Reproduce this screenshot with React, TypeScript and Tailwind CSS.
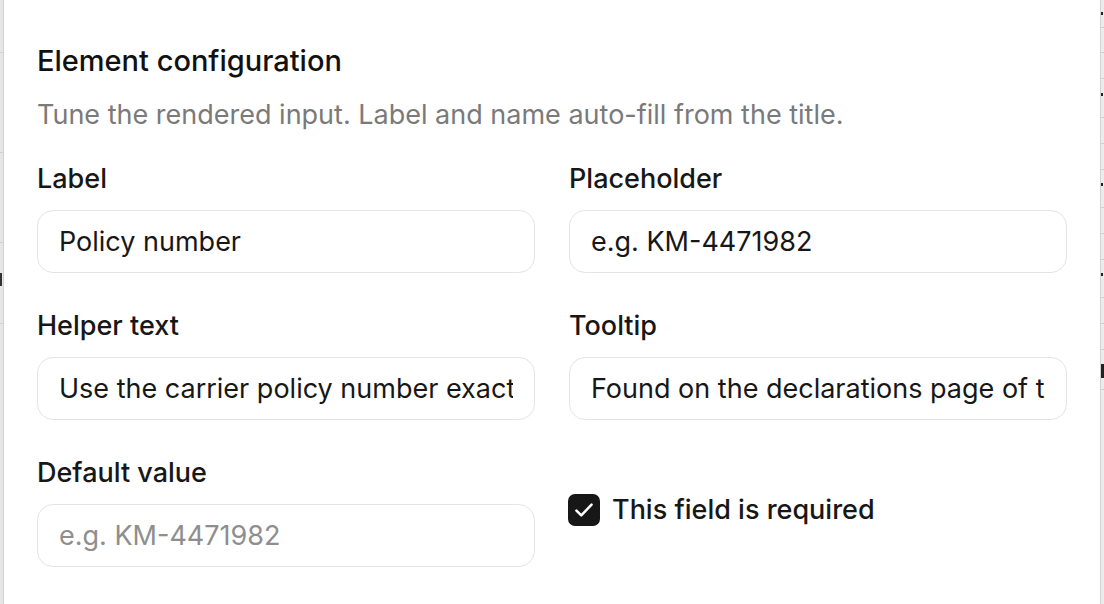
import React from "react";

function Field({ label, value, placeholder }: { label: string; value?: string; placeholder?: string }) {
  return (
    <div className="flex flex-col">
      <div className="text-[27px] leading-[32px] font-medium text-[#171717]">{label}</div>
      <input
        readOnly
        value={value ?? ""}
        placeholder={placeholder}
        className="mt-[15px] h-[63px] w-full rounded-[16px] border border-[#e4e4e4] bg-white px-[21px] text-[27px] text-[#171717] outline-none placeholder:text-[#8e8e8e]"
        style={{ fontFamily: "Inter, sans-serif" }}
      />
    </div>
  );
}

export default function App() {
  const rightLines = [27, 52, 78, 117, 143, 169, 207, 233, 259, 297, 323, 349, 389];
  return (
    <div
      className="flex h-[604px] w-[1104px] overflow-hidden bg-white text-[#171717]"
      style={{ fontFamily: "Inter, 'Noto Sans', sans-serif" }}
    >
      {/* left background strip */}
      <div className="relative h-full w-[3px] shrink-0 bg-[#e6e6e6]">
        <div className="absolute left-0 top-[52px] h-px w-full bg-[#cfcfcf]" />
        <div className="absolute left-0 top-[152px] h-px w-full bg-[#cfcfcf]" />
        <div className="absolute left-0 top-[242px] h-px w-full bg-[#cfcfcf]" />
        <div className="absolute left-0 top-[323px] h-px w-full bg-[#cfcfcf]" />
        <div className="absolute left-0 top-[273px] h-[13px] w-[2px] bg-[#333]" />
      </div>
      {/* modal */}
      <div className="flex h-full flex-1 flex-col border-x border-[#d2d2d2] bg-white pl-[33px] pr-[33px] pt-[43px]">
        <div className="text-[29px] leading-[36px] font-medium text-[#111]">Element configuration</div>
        <div className="mt-[20px] text-[27px] leading-[32px] text-[#7a7a7a]">
          Tune the rendered input. Label and name auto-fill from the title.
        </div>
        <div className="mt-[32px] grid grid-cols-2 gap-x-[34px] gap-y-[37px]">
          <Field label="Label" value="Policy number" />
          <Field label="Placeholder" value="e.g. KM-4471982" />
          <Field label="Helper text" value="Use the carrier policy number exactly as printed on the card." />
          <Field label="Tooltip" value="Found on the declarations page of the policy document." />
          <Field label="Default value" placeholder="e.g. KM-4471982" />
          <div className="flex items-start pt-[37px]">
            <div className="flex items-center gap-[12px]">
              <div className="-ml-px flex h-[32px] w-[32px] items-center justify-center rounded-[7px] bg-[#171717]">
                <svg width="26" height="26" viewBox="0 0 24 24" fill="none" stroke="white" strokeWidth="2.3" strokeLinecap="round" strokeLinejoin="round">
                  <path d="M5 12.5l4.5 4.5L19 7" />
                </svg>
              </div>
              <span className="text-[27px] leading-[32px] font-medium text-[#171717]">This field is required</span>
            </div>
          </div>
        </div>
      </div>
      {/* right background strip */}
      <div className="relative h-full w-[3px] shrink-0 bg-[#ececec]">
        {rightLines.map((y) => (
          <div key={y} className="absolute left-0 h-px w-full bg-[#d0d0d0]" style={{ top: y }} />
        ))}
        <div className="absolute left-0 top-[12px] h-[3px] w-[2px] bg-[#222]" />
        <div className="absolute left-0 top-[93px] h-[3px] w-[2px] bg-[#222]" />
        <div className="absolute left-0 top-[183px] h-[3px] w-[2px] bg-[#222]" />
        <div className="absolute left-0 top-[273px] h-[3px] w-[2px] bg-[#222]" />
        <div className="absolute left-0 top-[364px] h-[14px] w-[3px] bg-[#222]" />
      </div>
    </div>
  );
}
